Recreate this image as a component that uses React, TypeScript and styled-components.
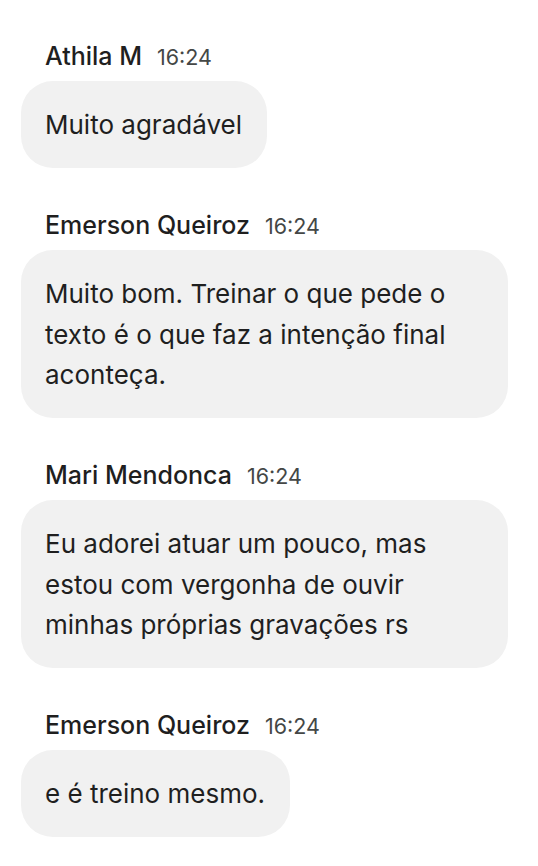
import styled, { createGlobalStyle } from "styled-components";

const GlobalStyle = createGlobalStyle`
  body {
    margin: 0;
    background: #ffffff;
    font-family: Inter, "Noto Sans", sans-serif;
    -webkit-font-smoothing: antialiased;
  }
`;

type Message = {
  author: string;
  time: string;
  lines: string[];
};

const messages: Message[] = [
  { author: "Athila M", time: "16:24", lines: ["Muito agradável"] },
  {
    author: "Emerson Queiroz",
    time: "16:24",
    lines: [
      "Muito bom. Treinar o que pede o",
      "texto é o que faz a intenção final",
      "aconteça.",
    ],
  },
  {
    author: "Mari Mendonca",
    time: "16:24",
    lines: [
      "Eu adorei atuar um pouco, mas",
      "estou com vergonha de ouvir",
      "minhas próprias gravações rs",
    ],
  },
  { author: "Emerson Queiroz", time: "16:24", lines: ["e é treino mesmo."] },
];

export default function App() {
  return (
    <>
      <GlobalStyle />
      <Feed>
        {messages.map((m, i) => (
          <MessageGroup key={i}>
            <Header>
              <Author>{m.author}</Author>
              <Time>{m.time}</Time>
            </Header>
            <Bubble $wrapped={m.lines.length > 1}>
              {m.lines.map((line, j) => (
                <Line key={j}>{line}</Line>
              ))}
            </Bubble>
          </MessageGroup>
        ))}
      </Feed>
    </>
  );
}

const Feed = styled.div`
  display: flex;
  flex-direction: column;
  gap: 43.5px;
  padding: 42px 21px 30px 21px;
`;

const MessageGroup = styled.div`
  display: flex;
  flex-direction: column;
  align-items: flex-start;
`;

const Header = styled.div`
  display: flex;
  align-items: baseline;
  gap: 15px;
  height: 28px;
  line-height: 28px;
  padding-left: 24px;
  margin-bottom: 11px;
`;

const Author = styled.span`
  font-size: 25px;
  font-weight: 500;
  color: #1f1f1f;
`;

const Time = styled.span`
  font-size: 21.5px;
  color: #444746;
`;

const Bubble = styled.div<{ $wrapped: boolean }>`
  box-sizing: border-box;
  width: ${(p) => (p.$wrapped ? "487px" : "auto")};
  padding: 24px 25px 22px 24px;
  border-radius: 32px;
  background: #f1f1f1;
  color: #1f1f1f;
  font-size: 26px;
  line-height: 40.5px;
`;

const Line = styled.div`
  white-space: nowrap;
`;
